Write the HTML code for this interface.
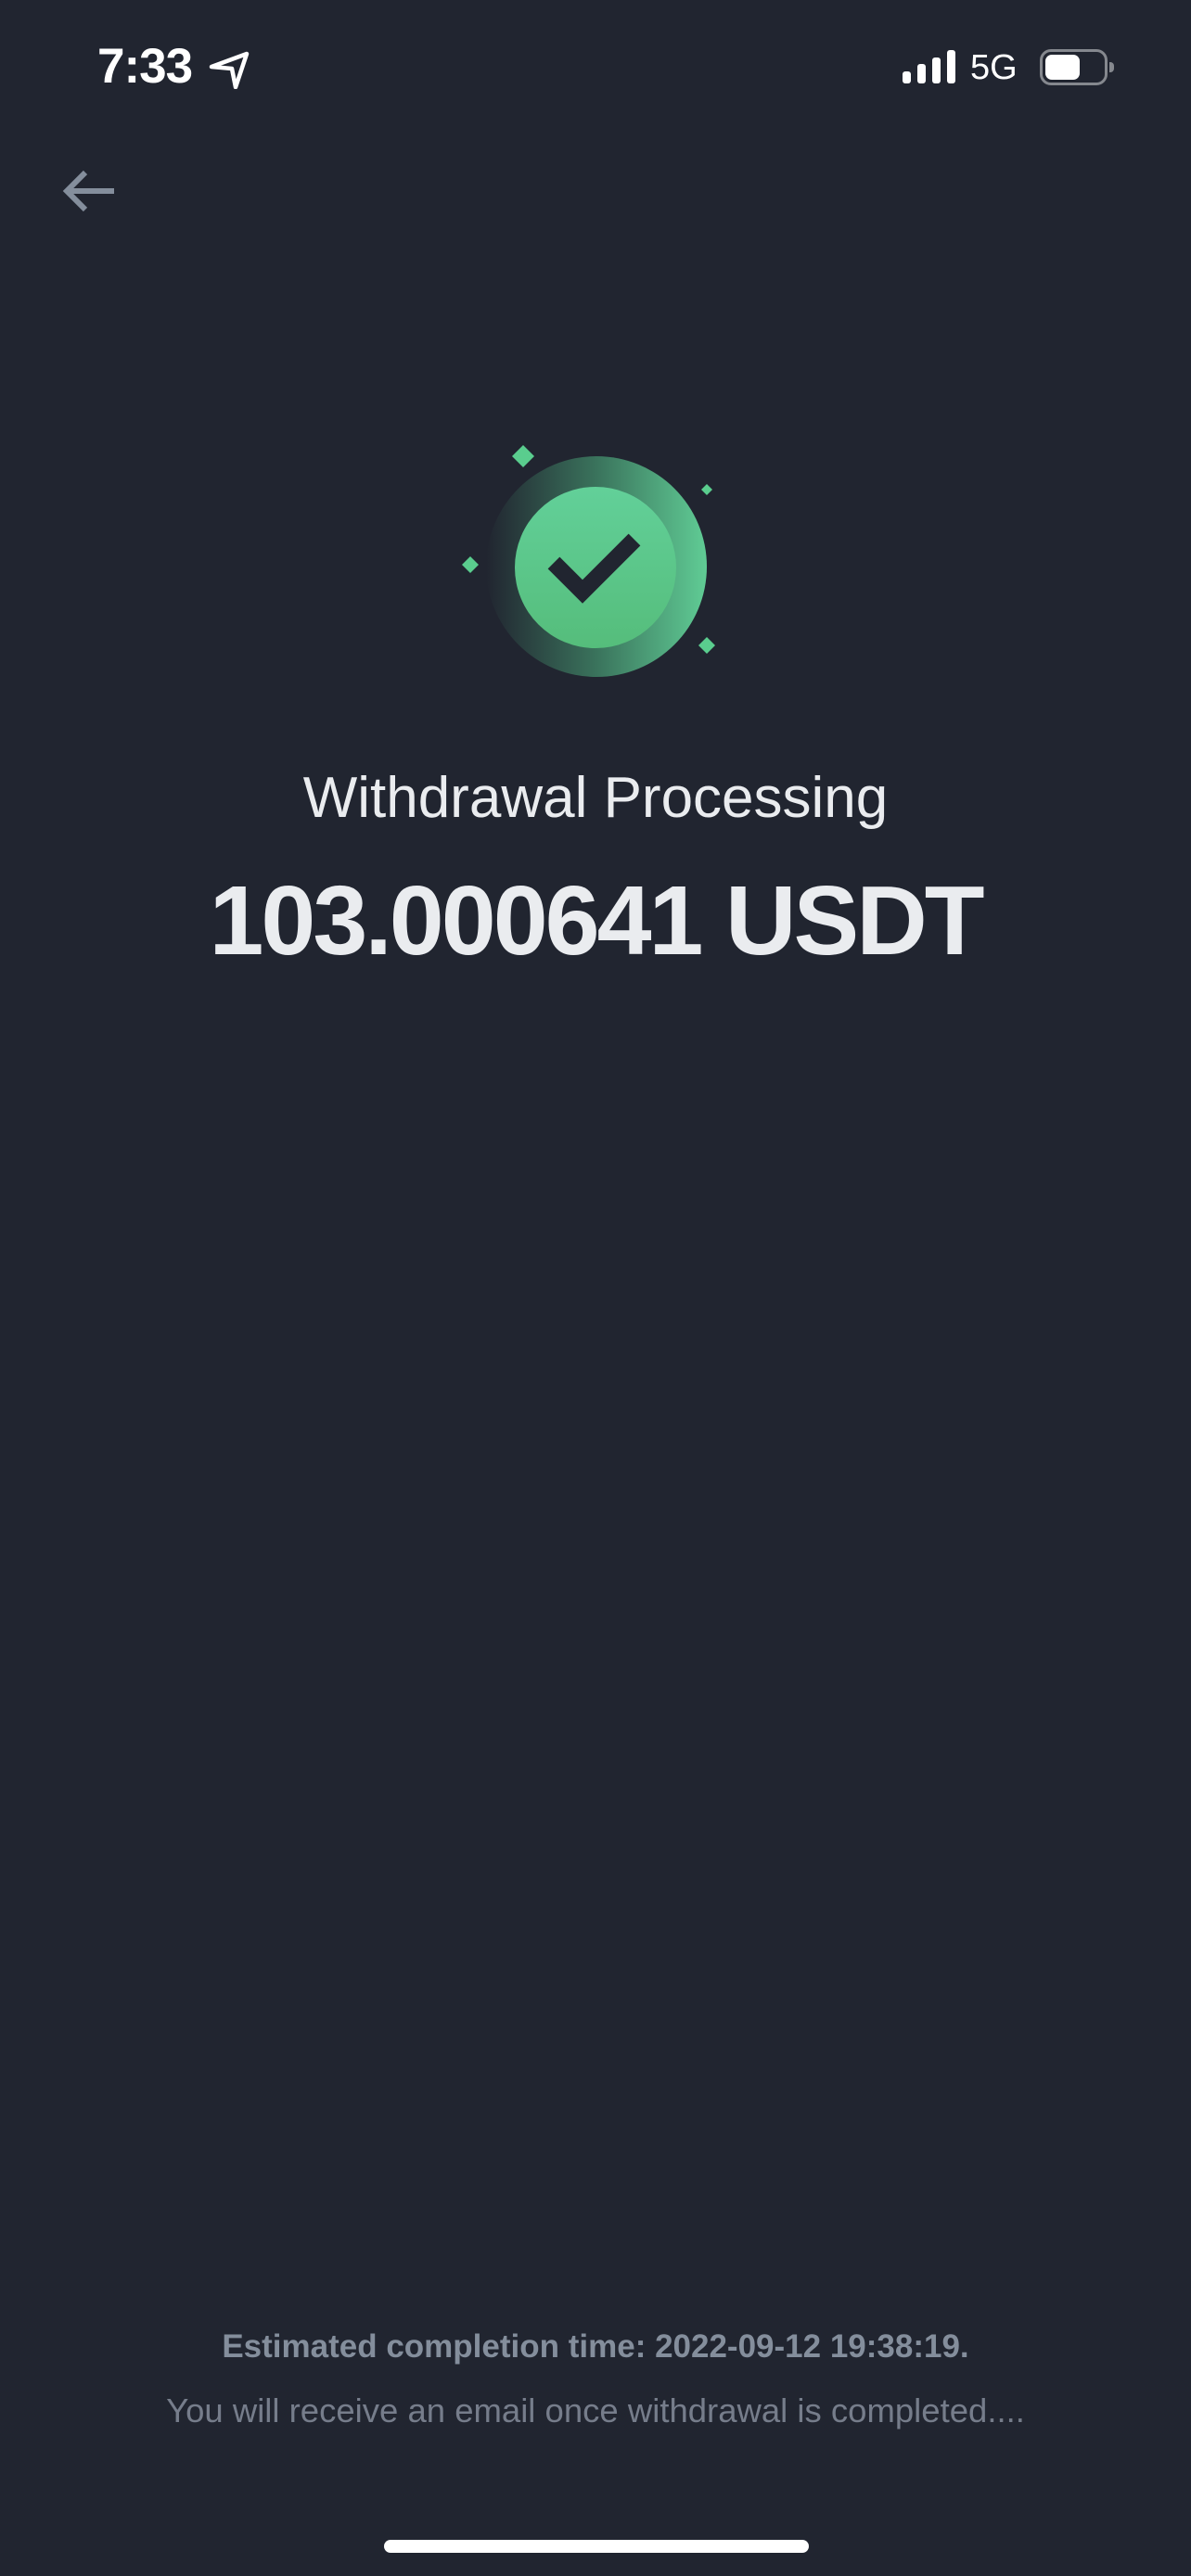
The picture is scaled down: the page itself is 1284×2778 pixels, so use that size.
<!DOCTYPE html>
<html><head><meta charset="utf-8"><style>
html,body{margin:0;padding:0;background:#212530;}
body{width:1284px;height:2778px;position:relative;overflow:hidden;font-family:"Liberation Sans",sans-serif;}
.a{position:absolute;}
.c{position:absolute;left:0;width:1284px;text-align:center;white-space:nowrap;}
</style></head><body>
<div class="a" style="left:105px;top:42px;font-size:53px;font-weight:bold;color:#fff;letter-spacing:-1px;line-height:60px;">7:33</div>
<svg class="a" style="left:222px;top:52px" width="52" height="44" viewBox="0 0 52 44"><path d="M6 20 L44 6 L32 42 L28 22 Z" fill="none" stroke="#fff" stroke-width="4.5" stroke-linejoin="round"/></svg>
<div class="a" style="left:973px;top:77px;width:9px;height:13px;background:#fff;border-radius:3px"></div>
<div class="a" style="left:989px;top:69px;width:9px;height:21px;background:#fff;border-radius:3px"></div>
<div class="a" style="left:1005px;top:62px;width:9px;height:28px;background:#fff;border-radius:3px"></div>
<div class="a" style="left:1021px;top:54px;width:9px;height:36px;background:#fff;border-radius:3px"></div>
<div class="a" style="left:1046px;top:51px;font-size:38px;color:#fff;line-height:44px;">5G</div>
<div class="a" style="left:1121px;top:53px;width:67px;height:33px;border:3px solid #85888e;border-radius:12px"></div>
<div class="a" style="left:1127px;top:59px;width:37px;height:27px;background:#fff;border-radius:7px"></div>
<div class="a" style="left:1196px;top:67px;width:5px;height:11px;background:#85888e;border-radius:0 4px 4px 0"></div>
<svg class="a" style="left:64px;top:182px" width="64" height="48" viewBox="0 0 64 48"><path d="M59 24 H10 M28 4 L8 24 L28 44" fill="none" stroke="#848e9c" stroke-width="6"/></svg>
<svg class="a" style="left:480px;top:460px" width="330" height="300" viewBox="480 460 330 300">
<defs>
<linearGradient id="og" x1="0" y1="0" x2="1" y2="0"><stop offset="0" stop-color="#212530"/><stop offset="0.5" stop-color="#3a735c"/><stop offset="1" stop-color="#60cc95"/></linearGradient>
<linearGradient id="ig" x1="0" y1="0" x2="0" y2="1"><stop offset="0" stop-color="#62d099"/><stop offset="1" stop-color="#55bd7b"/></linearGradient>
</defs>
<circle cx="643" cy="611" r="119" fill="url(#og)"/>
<circle cx="642" cy="612" r="87" fill="url(#ig)"/>
<path d="M597 607 L628 638 L684 582" fill="none" stroke="#212530" stroke-width="18"/>
<path d="M564 480 L576 492 L564 504 L552 492Z" fill="#5acd8e"/>
<path d="M762 522 L768 528 L762 534 L756 528Z" fill="#5acd8e"/>
<path d="M507 600 L516 609 L507 618 L498 609Z" fill="#5acd8e"/>
<path d="M762 687 L771 696 L762 705 L753 696Z" fill="#5acd8e"/>
</svg>
<div class="c" style="top:826px;font-size:62px;color:#eaecef;line-height:70px;">Withdrawal Processing</div>
<div class="c" style="top:933px;font-size:106px;font-weight:bold;color:#eaecef;line-height:120px;letter-spacing:-3px;">103.000641 USDT</div>
<div class="c" style="top:2511px;font-size:35px;font-weight:bold;color:#848e9c;line-height:40px;">Estimated completion time: 2022-09-12 19:38:19.</div>
<div class="c" style="top:2580px;font-size:36.5px;color:#767d8b;line-height:40px;">You will receive an email once withdrawal is completed....</div>
<div class="a" style="left:414px;top:2739px;width:458px;height:14px;background:#fff;border-radius:7px"></div>
</body></html>
